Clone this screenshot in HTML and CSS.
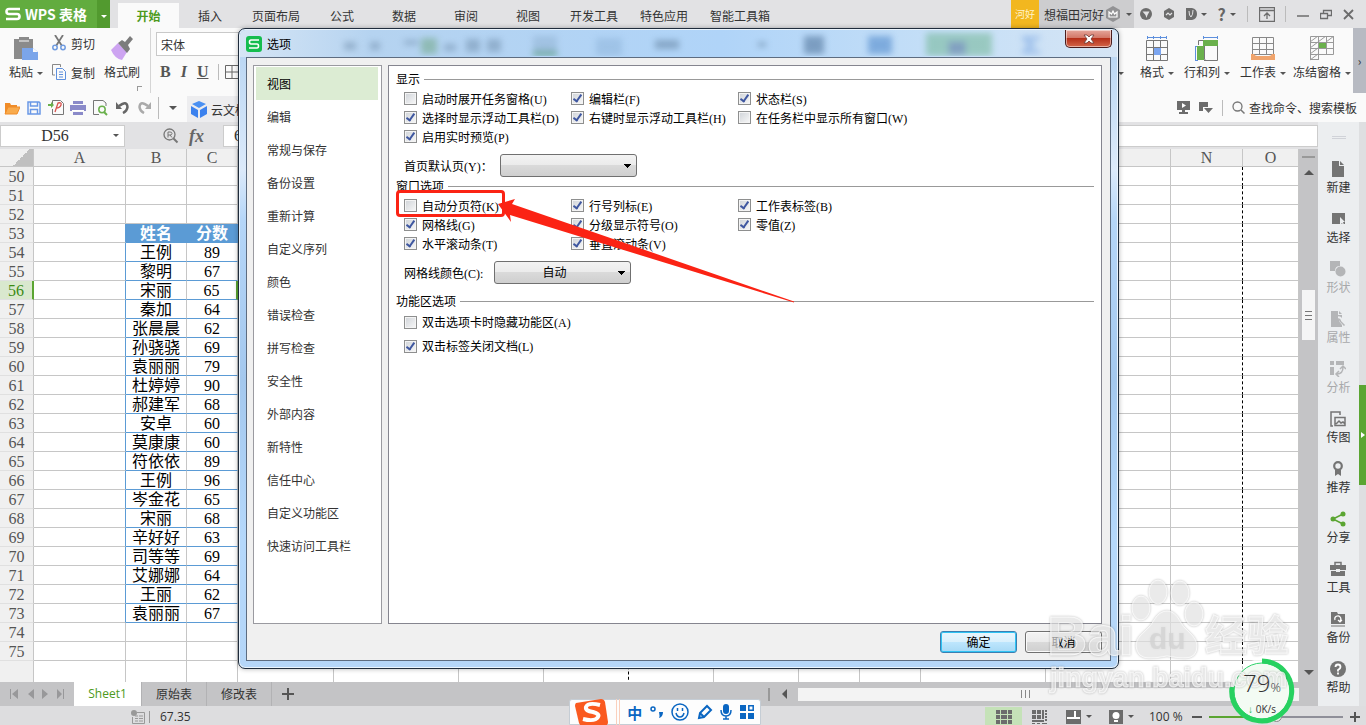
FILE: index.html
```html
<!DOCTYPE html>
<html lang="zh-CN">
  <head>
    <meta charset="UTF-8" />
    <meta name="viewport" content="width=device-width, initial-scale=1.0" />
    <title>WPS 表格</title>
    <link rel="stylesheet" href="styles.css">
  </head>
  <body>
    <div class="app">
      <header class="titlebar">
        <button class="brand">
          <svg width="16" height="14" viewBox="0 0 16 14"><path d="M15 2H4Q1.500 2 1.500 4.500T4 7H12Q14.500 7 14.500 9.500T12 12H1" fill="none" stroke="#fff" stroke-width="2.600"/></svg>
          <span>WPS 表格</span>
        </button>
        <button class="brand-more" aria-label="菜单"><i class="caret"></i></button>
        <nav class="menu">
          <a href="#" class="active">开始</a>
          <a href="#">插入</a>
          <a href="#">页面布局</a>
          <a href="#">公式</a>
          <a href="#">数据</a>
          <a href="#">审阅</a>
          <a href="#">视图</a>
          <a href="#">开发工具</a>
          <a href="#">特色应用</a>
          <a href="#">智能工具箱</a>
        </nav>
        <div class="account">
          <span class="avatar">河好</span>
          <button class="user">想福田河好
            <svg width="14" height="16" viewBox="0 0 14 16"><path d="M7 0l7 4v8l-7 4-7-4V4z" fill="#929294"/><path d="M3 6l2.500 2L7 5l1.500 3L11 6v5H3z" fill="none" stroke="#fff" stroke-width="1.200"/></svg>
            <i class="caret"></i>
          </button>
        </div>
        <div class="window-tools">
          <button aria-label="皮肤"><svg width="12" height="12" viewBox="0 0 12 12"><circle cx="6" cy="6" r="6" fill="#6c6c6c"/><path d="M2.500 3.500h7L7.500 7l-1 3-1-3z" fill="#e2e2e4"/></svg></button>
          <button aria-label="消息"><svg width="12" height="12" viewBox="0 0 12 12"><path d="M6 0l5 3v6l-5 3-5-3V3z" fill="#6c6c6c"/><path d="M3 7l2-2 2 2 2-2" fill="none" stroke="#e2e2e4" stroke-width="1.200"/></svg></button>
          <button aria-label="稻壳"><svg width="11" height="12" viewBox="0 0 11 12"><path d="M0 0h6q5 1 5 6t-5 6H0z" fill="#6c6c6c"/><path d="M3 3q0 5 2 6 2-2 2-7" fill="none" stroke="#e2e2e4"/></svg><i class="caret"></i></button>
          <button class="help" aria-label="帮助">?<i class="caret"></i></button>
          <i class="sep"></i>
          <button aria-label="隐藏功能区"><svg width="16" height="15" viewBox="0 0 16 15"><path d="M.5.5h15v14H.5zM0 3.500h16M8 12V6M5 9l3-3 3 3" fill="none" stroke="#6c6c6c" stroke-width="1.300"/></svg></button>
          <i class="sep"></i>
          <button aria-label="最小化"><svg width="12" height="12" viewBox="0 0 12 12"><path d="M0 8h12" stroke="#6c6c6c" stroke-width="1.500"/></svg></button>
          <button aria-label="还原"><svg width="12" height="11" viewBox="0 0 12 11"><path d="M.5 4.500h7v5h-7zM3.500 4V1.500h8v5H8" fill="none" stroke="#6c6c6c" stroke-width="1.300"/></svg></button>
          <button aria-label="关闭"><svg width="11" height="11" viewBox="0 0 11 11"><path d="M1 1l9 9M10 1l-9 9" stroke="#6c6c6c" stroke-width="1.800"/></svg></button>
        </div>
      </header>

      <section class="ribbon">
        <button class="big paste">
          <svg width="26" height="25" viewBox="0 0 26 25"><path d="M1 3h5V1h10v2h4v9H9v11H1z" fill="#8b8b8b"/><path d="M6 5h10" stroke="#fafafa"/><path d="M9 12h11l5 4v8H9z" fill="#7ba5ea"/><path d="M20 12v4h5" fill="#fafafa"/></svg>
          <span>粘贴<i class="caret"></i></span>
        </button>
        <div class="stack">
          <button><svg width="14" height="16" viewBox="0 0 14 16"><path d="M3 0l7 11M11 0L4 11" stroke="#777" stroke-width="1.800"/><circle cx="3" cy="12.500" r="2.200" fill="none" stroke="#6f9be0" stroke-width="1.500"/><circle cx="11" cy="12.500" r="2.200" fill="none" stroke="#6f9be0" stroke-width="1.500"/></svg>剪切</button>
          <button><svg width="14" height="16" viewBox="0 0 14 16"><path d="M3 11H.5V.5h8V3" fill="none" stroke="#888"/><path d="M4.500 4.500h6l3 3v8h-9zM7 8h4M7 10.500h4M7 13h4" fill="none" stroke="#5d8fdd"/></svg>复制</button>
        </div>
        <button class="big brush">
          <svg width="24" height="25" viewBox="0 0 24 25"><path d="M1 14l7-7 9 9-5 8q-7-1-11-10z" fill="#cda4f1"/><path d="M8 7l4-3 3 2 5-6 3 3-5 6 2 4-3 4z" fill="#7c7c7c"/></svg>
          <span>格式刷</span>
        </button>
        <i class="corner"></i>
        <div class="fonts">
          <input type="text" aria-label="字体" value="宋体">
          <div class="styles">
            <button aria-label="加粗"><b>B</b></button>
            <button aria-label="倾斜"><em>I</em></button>
            <button aria-label="下划线"><b><u>U</u></b></button>
            <i class="sep"></i>
            <svg width="14" height="14" viewBox="0 0 14 14"><path d="M.5.5h13v13H.5zM7 0v14M0 7h14" fill="none" stroke="#666"/></svg>
          </div>
        </div>
        <div class="ribbon-right">
          <button class="big sort">
            <svg width="24" height="25" viewBox="0 0 24 25"><path d="M17 1v19M14 18h6l-3 4z" fill="#5d8fdd" stroke="#5d8fdd" stroke-width="2"/></svg>
            <span>排序<i class="caret"></i></span>
          </button>
          <button class="big">
            <svg width="24" height="25" viewBox="0 0 24 25"><path d="M2 1.500h20M2.500 0v3M8.500 0v3M15.500 0v3M21.500 0v3" stroke="#5d8fdd"/><path d="M1.500 4.500h21v20h-21zM8.500 4v20M15.500 4v20M1 11.500h22M1 18.500h22" fill="none" stroke="#777"/><path d="M9 12h7v7H9z" fill="#7ba5f0"/></svg>
            <span>格式<i class="caret"></i></span>
          </button>
          <button class="big">
            <svg width="24" height="25" viewBox="0 0 24 25"><path d="M8 1.500h15M8.500 0v3M22.500 0v3M.5 10v15M0 10.500h3M0 24.500h3" stroke="#5d8fdd"/><path d="M8 4h15v6H8zM2 10h7v14H2z" fill="#6ab04c"/><path d="M3.500 9V4.500H8M9 24.500h13.500V10M9.500 10v13q0 1 1 1" fill="none" stroke="#777"/></svg>
            <span>行和列<i class="caret"></i></span>
          </button>
          <button class="big">
            <svg width="24" height="25" viewBox="0 0 24 25"><path d="M1.500 1.500h21v17h-21zM8.500 1v17M15.500 1v17M1 7.500h22M1 13.500h22" fill="none" stroke="#888"/><path d="M0 18h3q1 2 3 2h12q2 0 3-2h3v6H0z" fill="#f0a46c"/></svg>
            <span>工作表<i class="caret"></i></span>
          </button>
          <button class="big freeze">
            <svg width="24" height="25" viewBox="0 0 24 25"><path d="M.5.5h23v18H8.500v5h-8zM8.500 0v24M16.500 0v18M0 6.500h24M0 12.500h24M0 18.500h8M0 6l8-6M8 6l8-6M16 6l8-6M0 12l8-6M0 18l8-6M0 24l8-6" fill="none" stroke="#999"/><path d="M9 7h7v5H9z" fill="#6ab04c"/></svg>
            <span>冻结窗格<i class="caret"></i></span>
          </button>
          <button class="ribbon-next" aria-label="更多">›</button>
        </div>
      </section>

      <section class="quickbar">
        <button aria-label="打开"><svg width="16" height="14" viewBox="0 0 16 14"><path d="M1 13V2h5l1 2h6v2" fill="#f08c28"/><path d="M1 13L4 6h12l-3 7z" fill="#f9ab4c" stroke="#f08c28"/></svg></button>
        <button aria-label="保存"><svg width="14" height="14" viewBox="0 0 14 14"><path d="M1 1h11l1 1v11H1zM3.500 1v4h7V1M3.500 13V8.500h7V13" fill="none" stroke="#6a98e6" stroke-width="1.500"/></svg></button>
        <button aria-label="输出为PDF"><svg width="16" height="15" viewBox="0 0 16 15"><path d="M4.500 6V.5h8l3 3v11h-11V9" fill="none" stroke="#777"/><path d="M0 4h3V2l3 3-3 3V6H0z" fill="#6ab04c"/><path d="M7 12l3-9q4-1 3 2t-5 3" fill="none" stroke="#d9534f" stroke-width="1.300"/></svg></button>
        <button aria-label="打印"><svg width="16" height="14" viewBox="0 0 16 14"><path d="M3 0h10v3H3zM0 4h16v6H0zM3 11h10v3H3z" fill="#8a8ac9"/><path d="M2 9.500h12" stroke="#fff"/></svg></button>
        <button aria-label="打印预览"><svg width="15" height="16" viewBox="0 0 15 16"><path d="M13 6V3l-3-2.500H.5v14H6" fill="none" stroke="#777"/><circle cx="9" cy="9.500" r="3.200" fill="none" stroke="#6ab04c" stroke-width="1.500"/><path d="M11 12l3 3" stroke="#6ab04c" stroke-width="2"/></svg></button>
        <button aria-label="撤销"><svg width="13" height="13" viewBox="0 0 13 13"><path d="M3 5q8-6 8.500 1-.5 4-4.500 6" fill="none" stroke="#666" stroke-width="2.500"/><path d="M0 1v7h6z" fill="#666"/></svg></button>
        <button aria-label="恢复"><svg width="13" height="13" viewBox="0 0 13 13"><path d="M10 5Q2-1 1.500 6q.5 4 4.500 6" fill="none" stroke="#aaa" stroke-width="2.500"/><path d="M13 1v7H7z" fill="#aaa"/></svg></button>
        <i class="sep"></i>
        <button class="more" aria-label="更多"><i class="caret large"></i></button>
        <a href="#" class="doc-tab"><svg width="16" height="17" viewBox="0 0 16 17"><path d="M8 0l7 3-7 4-7-4z" fill="#4a90f2"/><path d="M0 5l7 4v8l-7-4zM16 5L9 9v8l7-4z" fill="#3c82ee"/></svg>云文档</a>
        <div class="search">
          <svg width="13" height="13" viewBox="0 0 13 13"><path d="M0 0h13v9H8v2h3v2H2v-2h3V9H0z" fill="#6c6c6c"/><path d="M5 2l4 2.500L5 7z" fill="#fff"/></svg>
          <svg width="14" height="13" viewBox="0 0 14 13"><path d="M0 1h9v5H4v4H0zM5 7h9l-4.500 5z" fill="#6c6c6c"/></svg>
          <i class="sep"></i>
          <svg width="13" height="13" viewBox="0 0 13 13"><circle cx="5.500" cy="5.500" r="4.500" fill="none" stroke="#777" stroke-width="1.300"/><path d="M9 9l3.500 3.500" stroke="#777" stroke-width="1.500"/></svg>
          <span>查找命令、搜索模板</span>
        </div>
      </section>

      <main class="body">
        <div class="workbook">
          <div class="formula-bar">
            <div class="name-box"><input type="text" aria-label="名称框" value="D56"><i class="caret"></i></div>
            <svg class="lookup" width="16" height="16" viewBox="0 0 16 16"><circle cx="6.500" cy="6.500" r="5.500" fill="none" stroke="#777" stroke-width="1.300"/><path d="M10.500 10.500l4 4" stroke="#777" stroke-width="2"/><path d="M5 9.500V4h2q2 0 2 1.500T7 7H5M7 7l2 2.500" fill="none" stroke="#777"/></svg>
            <em class="fx">fx</em>
            <input class="formula" type="text" aria-label="编辑栏" value="67.35">
          </div>
          <div class="sheet">
            <div class="grid"><table id="cells"></table></div>
            <div class="vscroll">
              <i class="split"></i>
              <i class="arrow up"></i>
              <span class="thumb"><i></i><i></i><i></i></span>
              <i class="arrow down"></i>
            </div>
          </div>
          <div class="sheet-tabs">
            <div class="tab-list">
              <svg width="54" height="10" viewBox="0 0 54 10"><path d="M0 0h1v10H0zM8 0v10L2 5zM24 0v10l-6-5zM32 0v10l6-5zM47 0v10l5-5zM53 0h1v10h-1z" fill="#98989a"/></svg>
              <a href="#" class="active">Sheet1</a>
              <a href="#">原始表</a>
              <a href="#">修改表</a>
              <button aria-label="新建工作表"><svg width="12" height="12" viewBox="0 0 12 12"><path d="M6 0v12M0 6h12" stroke="#555" stroke-width="2"/></svg></button>
            </div>
            <i class="split"></i>
            <i class="arrow left"></i>
            <div class="hscroll"><i></i><i></i><i></i></div>
          </div>
        </div>
        <aside class="pane">
          <i class="grip"></i>
          <button><svg width="14" height="16" viewBox="0 0 14 16"><path d="M1 0h7v5h5v11H1z" fill="#747474"/><path d="M9 0l4 4H9z" fill="#747474"/></svg>新建</button>
          <button><svg width="14" height="16" viewBox="0 0 14 16"><path d="M1 2h13v11H1z" fill="#747474"/><path d="M9 6v8l2-2 1 2h1l-1-3h2z" fill="#eceef0"/></svg>选择</button>
          <button class="off"><svg width="16" height="16" viewBox="0 0 16 16"><path d="M0 0h10v5q-5 0-5 5H0z" fill="#b4b5b7"/><circle cx="10.500" cy="10.500" r="5" fill="#b4b5b7"/></svg>形状</button>
          <button class="off"><svg width="16" height="16" viewBox="0 0 16 16"><path d="M1 0h7v4h4v12H1z" fill="#b4b5b7"/><path d="M9 0l3 3H9z" fill="#b4b5b7"/><path d="M8 7q3 0 3 3l4 5" fill="none" stroke="#eceef0" stroke-width="3.500"/><path d="M8 8q2 0 2.500 2.500l4 4" fill="none" stroke="#b4b5b7" stroke-width="1.500"/></svg>属性</button>
          <button class="off"><svg width="16" height="16" viewBox="0 0 16 16"><path d="M0 0h4v4H0zM6 0h8v4H6zM0 6h4v8H0z" fill="#b4b5b7"/><path d="M7 13q6 0 6-7M9 10l-3 3 3 3M10 8l3-3 3 3" fill="none" stroke="#b4b5b7" stroke-width="1.500"/></svg>分析</button>
          <button><svg width="16" height="16" viewBox="0 0 16 16"><path d="M3 15H1V1h9v3" fill="none" stroke="#747474" stroke-width="1.500"/><path d="M5 6.500h10v8H5zM6 13l3-3 2 2 2-1 2 2" fill="none" stroke="#747474" stroke-width="1.500"/></svg>传图</button>
          <button><svg width="12" height="16" viewBox="0 0 12 16"><circle cx="6" cy="5" r="3.800" fill="none" stroke="#747474" stroke-width="2.200"/><path d="M3 9v6l3-2 3 2V9" fill="#747474"/></svg>推荐</button>
          <button><svg width="16" height="16" viewBox="0 0 16 16"><path d="M13 3L3 8l10 5" fill="none" stroke="#5ba532" stroke-width="1.500"/><g fill="#5ba532"><circle cx="13" cy="3" r="2.500"/><circle cx="3" cy="8" r="2.500"/><circle cx="13" cy="13" r="2.500"/></g></svg>分享</button>
          <button><svg width="16" height="16" viewBox="0 0 16 16"><path d="M0 4h16v5H0zM1 10h14v5H1z" fill="#747474"/><path d="M5 4V1.500h6V4" fill="none" stroke="#747474" stroke-width="1.500"/><path d="M6 8h4v3H6z" fill="#eceef0"/></svg>工具</button>
          <button><svg width="16" height="16" viewBox="0 0 16 16"><path d="M1 1h6l1 2h7v10H1z" fill="#747474"/><path d="M1 15h14" stroke="#747474"/><path d="M5 9a3 3 0 1 1 5 1M8 9l2 2 2-2" fill="none" stroke="#fff" stroke-width="1.200"/></svg>备份</button>
          <button><svg width="16" height="16" viewBox="0 0 16 16"><circle cx="8" cy="8" r="8" fill="#747474"/><path d="M5.500 6q0-2.500 2.500-2.500T10.500 6Q10.500 7.500 8 9v1.500M8 11.500v2" fill="none" stroke="#fff" stroke-width="1.800"/></svg>帮助</button>
        </aside>
        <div class="edge"><button aria-label="展开"><i></i></button></div>
      </main>

      <footer class="status">
        <svg width="14" height="14" viewBox="0 0 14 14"><circle cx="3" cy="3" r="3" fill="#999"/><path d="M6 2.500h7.500v11h-12V7M4 6h3M8 6h4M4 8.500h3M8 8.500h4M4 11h3M8 11h4" fill="none" stroke="#999"/></svg>
        <i class="sep"></i>
        <span class="sum">67.35</span>
        <div class="views">
          <button class="active" aria-label="普通视图"><svg width="16" height="14" viewBox="0 0 16 14"><path d="M0 0h16v14H0z" fill="#6c6c6c"/><path d="M0 4.500h16M0 9.500h16M4.500 0v14M11.500 0v14" stroke="#c5e2b8"/></svg></button>
          <button aria-label="分页预览"><svg width="16" height="14" viewBox="0 0 16 14"><path d="M0 0h4v4H0zM5 0h4v4H5zM0 5h4v4H0zM5 5h4v4H5zM10 0h2v9h-2zM0 10h12v2H0zM13 0h2v2h-2zM13 3h2v2h-2zM13 6h2v2h-2zM13 9h2v2h-2zM0 13h3v1H0zM5 13h3v1H5zM10 13h5v1h-5z" fill="#6c6c6c"/></svg></button>
          <button aria-label="阅读模式"><svg width="15" height="14" viewBox="0 0 15 14"><path d="M0 0h15v14H0z" fill="#6c6c6c"/><path d="M9 1v8M1 8h13" stroke="#fff" stroke-width="2"/></svg><i class="caret"></i></button>
          <button aria-label="护眼模式"><svg width="14" height="14" viewBox="0 0 14 14"><path d="M0 0h14v14H0z" fill="#6c6c6c"/><circle cx="7" cy="5.500" r="3.500" fill="#fff"/><path d="M5 10h4v2H5z" fill="#fff"/></svg><i class="caret"></i></button>
          <span class="zoom-value">100 %</span>
          <button class="step" aria-label="缩小"><svg width="10" height="10" viewBox="0 0 10 10"><path d="M0 5h10" stroke="#555" stroke-width="2"/></svg></button>
          <input class="zoom" type="range" aria-label="缩放" value="50">
          <button class="step" aria-label="放大"><svg width="10" height="10" viewBox="0 0 10 10"><path d="M0 5h10M5 0v10" stroke="#555" stroke-width="2"/></svg></button>
        </div>
      </footer>
    </div>

    <div class="dialog" role="dialog" aria-label="选项">
      <div class="dialog-title">
        <svg class="glass" width="860" height="26" viewBox="0 0 860 26">
          <defs><filter id="soft" x="-20%" y="-20%" width="140%" height="140%"><feGaussianBlur stdDeviation="3"/></filter></defs>
          <g filter="url(#soft)" opacity=".5">
            <path d="M98 12h12v8H98zM124 12h10v8h-10zM158 10h14v5h-14zM198 14h12v7h-12zM220 9h14v13h-14zM241 9h14v13h-14z" fill="#6f8daa"/>
            <path d="M175 8h16v16h-16z" fill="#6ba37c"/>
            <path d="M287 6h24v14h-24z" fill="#8fb0d0"/><path d="M287 20h24v6h-24z" fill="#2c8448"/>
            <path d="M350 8h26v18h-26z" fill="#8db3d9"/>
            <path d="M409 10h24v9h-24zM512 12h8v5h-8z" fill="#5d7b99"/>
            <path d="M558 6h20v18h-20z" fill="#3f648c"/>
            <path d="M622 6h24v18h-24z" fill="#3e7cc4"/>
            <path d="M680 3h66v23h-66z" fill="#6bb28c"/><path d="M702 11h18v14h-18z" fill="#3f648c"/>
            <path d="M776 6h18v4h-10l6 5-6 5h10v4h-18v-4l7-5-7-5z" fill="#6f9fe0"/>
          </g>
        </svg>
        <svg class="logo" width="16" height="16" viewBox="0 0 16 16"><rect width="16" height="16" rx="3" fill="#14bd4f"/><path d="M13 4H5Q3.500 4 3.500 6T5 8H11Q12.500 8 12.500 10T11 12H3" fill="none" stroke="#fff" stroke-width="1.600"/></svg>
        <span>选项</span>
        <button class="close" aria-label="关闭"><svg width="12" height="10" viewBox="0 0 12 10"><path d="M1 1h3l2 2 2-2h3L8 5l3 4H8L6 7 4 9H1l3-4z" fill="#fff" stroke="#6b3a36" stroke-width=".8"/></svg></button>
      </div>
      <div class="dialog-body">
        <div class="dialog-main">
          <nav class="options-nav">
            <a href="#" class="active">视图</a>
            <a href="#">编辑</a>
            <a href="#">常规与保存</a>
            <a href="#">备份设置</a>
            <a href="#">重新计算</a>
            <a href="#">自定义序列</a>
            <a href="#">颜色</a>
            <a href="#">错误检查</a>
            <a href="#">拼写检查</a>
            <a href="#">安全性</a>
            <a href="#">外部内容</a>
            <a href="#">新特性</a>
            <a href="#">信任中心</a>
            <a href="#">自定义功能区</a>
            <a href="#">快速访问工具栏</a>
          </nav>
          <div class="options">
            <h3>显示</h3>
            <div class="checks">
              <label><input type="checkbox">启动时展开任务窗格(U)</label>
              <label><input type="checkbox" checked>编辑栏(F)</label>
              <label><input type="checkbox" checked>状态栏(S)</label>
              <label><input type="checkbox" checked>选择时显示浮动工具栏(D)</label>
              <label><input type="checkbox" checked>右键时显示浮动工具栏(H)</label>
              <label><input type="checkbox">在任务栏中显示所有窗口(W)</label>
              <label><input type="checkbox" checked>启用实时预览(P)</label>
            </div>
            <div class="field">
              <label for="home">首页默认页(Y)：</label>
              <select id="home"><option></option></select>
            </div>
            <h3>窗口选项</h3>
            <div class="checks">
              <label class="marked"><input type="checkbox">自动分页符(K)</label>
              <label><input type="checkbox" checked>行号列标(E)</label>
              <label><input type="checkbox" checked>工作表标签(B)</label>
              <label><input type="checkbox" checked>网格线(G)</label>
              <label><input type="checkbox" checked>分级显示符号(O)</label>
              <label><input type="checkbox" checked>零值(Z)</label>
              <label><input type="checkbox" checked>水平滚动条(T)</label>
              <label><input type="checkbox" checked>垂直滚动条(V)</label>
            </div>
            <div class="field line-color">
              <label for="color">网格线颜色(C):</label>
              <select id="color"><option>自动</option></select>
            </div>
            <h3>功能区选项</h3>
            <div class="checks loose">
              <label><input type="checkbox">双击选项卡时隐藏功能区(A)</label>
              <label><input type="checkbox" checked>双击标签关闭文档(L)</label>
            </div>
            <svg class="pointer" width="300" height="106" viewBox="0 0 300 106"><path d="M0 6L17 1 14 6 296 103.500 296 104.500 12 17 13 24z" fill="#fb2314"/></svg>
          </div>
        </div>
        <div class="dialog-actions">
          <button class="primary">确定</button>
          <button>取消</button>
        </div>
      </div>
    </div>

    <div class="speed">
      <svg width="68" height="68" viewBox="0 0 68 68"><circle cx="34" cy="34" r="32" fill="#fff" fill-opacity=".75"/><circle cx="34" cy="34" r="28" fill="#f3fbf3" stroke="#2fd36b"/><path d="M34 4A30 30 0 1 1 4 30" fill="none" stroke="#27d160" stroke-width="5"/></svg>
    </div>

    <svg class="watermark" width="260" height="130" viewBox="0 0 260 130">
      <g fill="#fff" fill-opacity=".6" stroke="#fff" stroke-opacity=".7">
        <text x="2" y="80" class="wm-name">Bai</text>
        <ellipse cx="96" cy="33" rx="9" ry="12"/>
        <ellipse cx="113" cy="17" rx="9" ry="12"/>
        <ellipse cx="135" cy="18" rx="9" ry="12"/>
        <ellipse cx="149" cy="39" rx="9" ry="12"/>
        <path d="M122 36q8 0 13 10 3 6 9 11 8 7 8 14 0 12-12 12-8 0-18-2-9 2-18 2-12 0-13-12 0-8 9-15 6-5 9-11 5-9 13-9z"/>
        <text x="160" y="76" class="wm-cn">经验</text>
        <text x="5" y="112" class="wm-url">jingyan.baidu.com</text>
      </g>
      <text x="104" y="74" class="wm-du">du</text>
    </svg>

    <div class="speed readout">
      <p>79<small>%</small></p>
      <span><b>↓</b> 0K/s</span>
    </div>

    <div class="ime">
      <svg width="34" height="28" viewBox="0 0 34 28"><path d="M2 5L27 1q3 0 4 3l3 20q0 3-3 4H8q-2 0-3-3L1 8q0-2 1-3z" fill="#fa5a20"/><path d="M26 7q-12-3-14 2-1 4 7 5 7 2 5 5-3 5-15 2" fill="none" stroke="#fff" stroke-width="4"/></svg>
      <i class="rule"></i>
      <b>中</b>
      <svg width="14" height="14" viewBox="0 0 14 14"><circle cx="3" cy="4" r="2" fill="none" stroke="#0a66c2" stroke-width="1.500"/><path d="M9 7h4q0 5-4 6 1-2 0-6z" fill="#0a66c2"/></svg>
      <svg width="18" height="18" viewBox="0 0 18 18"><g fill="none" stroke="#0a66c2" stroke-width="1.500"><circle cx="9" cy="9" r="8"/><path d="M5 10q1 4 4 4t4-4M6.500 5v3M11.500 5v3"/></g></svg>
      <svg width="16" height="16" viewBox="0 0 16 16"><path d="M2 14l1-5 7-7 4 4-7 7zM3 9l4 4" fill="none" stroke="#0a66c2" stroke-width="2"/></svg>
      <svg width="12" height="16" viewBox="0 0 12 16"><rect x="3" y="0" width="6" height="10" rx="3" fill="#0a66c2"/><path d="M1 6q0 6 5 6t5-6M6 12v3M3 15h6" fill="none" stroke="#0a66c2" stroke-width="1.500"/></svg>
      <svg width="14" height="14" viewBox="0 0 14 14"><path d="M0 0h6v6H0zM0 8h6v6H0zM8 8h6v6H8z" fill="#0a66c2"/><path d="M8.800.8h4.400v4.400H8.800z" fill="none" stroke="#0a66c2" stroke-width="1.500"/></svg>
    </div>

    <script src="script.js"></script>
  </body>
</html>
```
FILE: styles.css
```css
* {
  box-sizing: border-box;
  margin: 0;
  padding: 0;
}

body {
  font-family: "Noto Sans CJK SC", sans-serif;
  font-size: 12px;
  color: #333;
  overflow: hidden;
}

button,
input,
select {
  font: inherit;
  color: inherit;
  border: none;
  background: none;
}

a {
  color: inherit;
  text-decoration: none;
}

svg {
  display: block;
  flex: none;
}

.app {
  display: flex;
  flex-direction: column;
  height: 100vh;
  background-color: #fafafa;
}

.caret {
  display: inline-block;
  border: 3px solid transparent;
  border-top-color: #555;
  border-bottom: none;
  margin-left: 4px;
  vertical-align: middle;
}

.caret.large {
  border-width: 4px;
  border-bottom: none;
  margin: 0;
}

.sep {
  width: 1px;
  height: 16px;
  background-color: #bbb;
}

/* title bar */
.titlebar {
  display: flex;
  flex: none;
  height: 28px;
  background-color: #e2e2e4;
}

.brand {
  display: flex;
  align-items: center;
  gap: 4px;
  width: 97px;
  padding-left: 5px;
  background-color: #62ac3f;
  color: #fff;
  font-size: 14px;
  font-weight: bold;
  white-space: nowrap;
}

.brand-more {
  width: 13px;
  background-color: #529a2f;
}

.brand-more .caret {
  border-top-color: #fff;
  margin: 0;
}

.menu {
  display: flex;
  padding-left: 8px;
}

.menu a {
  min-width: 62px;
  padding: 0 11px;
  line-height: 32px;
  text-align: center;
}

.menu .active {
  min-width: 61px;
  height: 25px;
  margin-top: 3px;
  line-height: 26px;
  background-color: #fafafa;
  color: #4d9a20;
  font-weight: bold;
}

.account {
  display: flex;
  margin-left: auto;
}

.avatar {
  width: 28px;
  background-color: #f2b71f;
  color: #fff3c8;
  font-size: 10px;
  line-height: 27px;
  text-align: center;
}

.user {
  display: flex;
  align-items: center;
  gap: 2px;
  width: 95px;
  padding-left: 5px;
  background-color: #cdcdcf;
  white-space: nowrap;
}

.window-tools {
  display: flex;
  align-items: center;
  justify-content: space-between;
  width: 232px;
  padding: 0 12px 0 6px;
}

.window-tools button {
  display: flex;
  align-items: center;
}

.window-tools .help {
  color: #666;
  font-size: 16px;
  font-weight: bold;
}

/* ribbon */
.ribbon {
  display: flex;
  flex: none;
  height: 65px;
}

.big {
  display: flex;
  flex-direction: column;
  align-items: center;
  gap: 2px;
  padding-top: 8px;
  white-space: nowrap;
}

.paste {
  width: 52px;
}

.stack {
  display: flex;
  flex-direction: column;
  gap: 11px;
  width: 52px;
  padding-top: 6px;
}

.stack button {
  display: flex;
  align-items: center;
  gap: 5px;
  height: 18px;
}

.brush {
  width: 36px;
}

.corner {
  align-self: flex-end;
  width: 5px;
  height: 5px;
  margin: 0 0 2px -3px;
  border: 1px solid #999;
  border-right: none;
  border-bottom: none;
}

.fonts {
  width: 120px;
  margin-left: 8px;
  padding: 4px 0 0 5px;
  border-left: 1px solid #d5d5d5;
}

.fonts input {
  width: 100%;
  height: 24px;
  padding-left: 4px;
  border: 1px solid #c9c9c9;
  background-color: #fff;
}

.styles {
  display: flex;
  align-items: center;
  gap: 10px;
  height: 32px;
  padding-left: 4px;
  color: #555;
  font-family: "Liberation Serif", serif;
  font-size: 16px;
}

.styles .sep {
  margin-right: -4px;
}

.styles em {
  font-weight: bold;
}

.ribbon-right {
  display: flex;
  margin-left: auto;
}

.ribbon-right .big {
  width: 56px;
}

.ribbon-right .freeze {
  width: 62px;
}

.ribbon-right .big:nth-child(2) {
  width: 44px;
}

.ribbon-next {
  width: 13px;
  background-color: #b7bac2;
}

/* quick access */
.quickbar {
  display: flex;
  align-items: center;
  flex: none;
  height: 29px;
  padding-left: 1px;
}

.quickbar button {
  display: flex;
  justify-content: center;
  width: 22px;
}

.quickbar > .sep {
  height: 22px;
  margin-left: 3px;
}

.quickbar .more {
  width: 28px;
}

.doc-tab {
  display: flex;
  align-items: center;
  gap: 4px;
  align-self: stretch;
  width: 80px;
  margin-top: 3px;
  padding-left: 4px;
  background-color: #ededef;
  white-space: nowrap;
}

.search {
  display: flex;
  align-items: center;
  gap: 9px;
  margin-left: auto;
  padding-right: 9px;
}

.search span {
  margin-left: -5px;
}

/* workbook */
.body {
  display: flex;
  flex: 1;
  min-height: 0;
}

.workbook {
  display: flex;
  flex-direction: column;
  flex: 1;
  min-width: 0;
}

.formula-bar {
  display: flex;
  align-items: center;
  height: 27px;
  padding: 2px 0;
  background-color: #e2e2e4;
}

.name-box {
  display: flex;
  align-items: center;
  width: 125px;
  height: 22px;
  padding-right: 5px;
  border: 1px solid #ccc;
  background-color: #fff;
}

.formula-bar input {
  width: 100%;
  font-family: "Liberation Serif", serif;
  font-size: 16px;
}

.name-box input {
  text-align: center;
}

.lookup {
  margin-left: 38px;
}

.fx {
  width: 44px;
  padding-left: 10px;
  color: #666;
  font-family: "Liberation Serif", serif;
  font-size: 18px;
  font-weight: bold;
  line-height: 20px;
}

.formula-bar .formula {
  flex: 1;
  height: 22px;
  padding-left: 10px;
  border: 1px solid #ccc;
  background-color: #fff;
}

.sheet {
  display: flex;
  flex: 1;
  min-height: 0;
}

.grid {
  flex: 1;
  min-width: 0;
  overflow: hidden;
  background-color: #fff;
}

.grid table {
  width: 100%;
  table-layout: fixed;
  border-spacing: 0;
  color: #000;
  font-family: "Liberation Serif", "Noto Sans CJK SC", serif;
  font-size: 16px;
  line-height: 16px;
  text-align: center;
}

.grid th,
.grid td {
  height: 19px;
  padding-top: 2px;
  border-right: 1px solid #c6c6c6;
  border-bottom: 1px solid #c6c6c6;
  overflow: hidden;
  white-space: nowrap;
}

.grid th {
  background-color: #f0f0f0;
  color: #555;
  font-weight: normal;
}

.grid thead th {
  height: 18px;
  padding-top: 1px;
}

.grid tbody th {
  border-bottom-color: #e0e0e0;
}

/* the last row is cut off by the tab bar */
.grid tbody tr:last-child > * {
  height: 24px;
}

.grid .select-all {
  background: linear-gradient(135deg, #f0f0f0 60%, #c0c0c0 60%);
}

.grid .before-data {
  border-right-color: #5b9bd5;
}

.grid .data {
  border-bottom-color: #5b9bd5;
}

.grid .head {
  border-color: #5b9bd5;
  background-color: #5b9bd5;
  color: #fff;
  font-weight: bold;
}

.grid tbody .current {
  border-right: 2px solid #5ba532;
  background-color: #d9e8ce;
  color: #3b8a14;
}

.grid .beside-current {
  border-right: 2px solid #5ba532;
}

.grid td.page-break {
  border-right: 1px dashed #000;
}

.arrow {
  border: 5px solid transparent;
}

.arrow.up {
  border-top: none;
  border-bottom-color: #555;
}

.arrow.down {
  border-bottom: none;
  border-top-color: #555;
}

.arrow.left {
  border-left: none;
  border-right-color: #555;
}

.vscroll {
  display: flex;
  flex-direction: column;
  align-items: center;
  width: 19px;
  padding: 7px 0;
  background-color: #c4c4c6;
}

.vscroll .split {
  width: 13px;
  height: 2px;
  margin-bottom: 12px;
  background-color: #999;
}

.vscroll .thumb {
  display: flex;
  flex-direction: column;
  align-items: center;
  justify-content: center;
  gap: 3px;
  width: 13px;
  height: 50px;
  margin: 115px 0 auto;
  background-color: #f5f5f5;
}

.vscroll .thumb i {
  width: 7px;
  height: 1px;
  background-color: #777;
}

.sheet-tabs {
  display: flex;
  align-items: center;
  height: 24px;
  padding-right: 19px;
  background-color: #c4c4c6;
}

.tab-list {
  display: flex;
  align-items: center;
  flex: 0 0 59%;
  height: 100%;
}

.tab-list svg {
  margin: 0 10px;
}

.tab-list a {
  width: 65px;
  height: 25px;
  border-right: 1px solid #b2b2b4;
  line-height: 24px;
  text-align: center;
}

.tab-list .active {
  width: 68px;
  background-color: #fff;
  color: #4d9a20;
  font-family: "Open Sans", sans-serif;
  font-size: 12px;
}

.sheet-tabs > .split {
  width: 2px;
  height: 13px;
  margin: 0 12px 0 2px;
  background-color: #999;
}

.hscroll {
  display: flex;
  align-items: center;
  justify-content: center;
  flex: 1;
  gap: 3px;
  height: 13px;
  margin-left: 11px;
  padding-right: 46px;
  background-color: #f3f3f3;
}

.hscroll i {
  width: 1px;
  height: 8px;
  background-color: #888;
}

/* task pane */
.pane {
  display: flex;
  flex-direction: column;
  align-items: center;
  width: 41px;
  padding-top: 14px;
  background-color: #eceef0;
}

.pane button {
  display: flex;
  flex: none;
  flex-direction: column;
  align-items: center;
  gap: 1px;
  height: 50px;
}

.grip {
  flex: none;
  width: 14px;
  height: 3px;
  margin-bottom: 22px;
  border: 1px solid #d0d2d8;
  border-width: 1px 0;
}

.pane .off {
  color: #a8a9ab;
}

.edge {
  width: 7px;
  padding-top: 263px;
  background-color: #dedfe1;
}

.edge button {
  display: flex;
  align-items: center;
  width: 7px;
  height: 100px;
  padding-left: 2px;
  background-color: #5ba532;
}

.edge i {
  border: 3px solid transparent;
  border-left: 4px solid #fff;
  border-right: none;
}

/* status bar */
.status {
  display: flex;
  align-items: center;
  flex: none;
  height: 19px;
  padding: 2px 6px 0 131px;
  background-color: #dddddf;
}

.status .sep {
  height: 12px;
  margin: 0 10px 0 4px;
  background-color: #999;
}

.sum,
.zoom-value {
  font-family: "Open Sans", sans-serif;
  font-size: 12px;
}

.views {
  display: flex;
  align-items: center;
  margin-left: auto;
}

.views button {
  display: flex;
  align-items: center;
  justify-content: center;
  gap: 1px;
  width: 42px;
  height: 19px;
}

.views button:nth-child(2) {
  width: 36px;
}

.views .active {
  width: 37px;
  background-color: #c5e2b8;
}

.zoom-value {
  width: 50px;
  padding-left: 7px;
  white-space: nowrap;
}

.views .step {
  width: 10px;
}

.zoom {
  width: 134px;
  height: 12px;
  margin: 0 7px;
  appearance: none;
  background: linear-gradient(to right, #5ba532 50%, #8f8f99 50%) center / 100% 2px no-repeat;
}

.zoom::-webkit-slider-thumb {
  appearance: none;
  width: 11px;
  height: 11px;
  border: 1px solid #888;
  border-radius: 50%;
  background-color: #eee;
}

/* options dialog */
.dialog {
  position: absolute;
  top: 28px;
  left: 238px;
  width: 881px;
  padding: 0 7px 7px;
  border: 1px solid #1f2c3c;
  border-radius: 7px;
  background: linear-gradient(to bottom, #b4d3f2, #dceafa 22%, #b5d6f8 30%, #a4c8ee 55%, #b5d8fb 80%, #b5d6f8);
  box-shadow: inset 0 0 0 1px #eaf4fd, 0 0 5px rgba(0, 0, 0, 0.3);
  color: #000;
  font-family: "Liberation Serif", "Noto Sans CJK SC", serif;
}

.dialog-title {
  position: relative;
  display: flex;
  align-items: center;
  gap: 5px;
  height: 27px;
  margin: 1px -6px 0;
  padding-left: 6px;
  border-radius: 6px 6px 0 0;
  background: linear-gradient(to right, #d5e5f5, #b5d3f0 15%, #b0d4f8 55%, #c5dff7 80%, #d5e5f5);
  font-family: "Noto Sans CJK SC", sans-serif;
}

.glass {
  position: absolute;
  top: 0;
  left: 6px;
}

.logo,
.dialog-title span {
  position: relative;
}

.close {
  position: absolute;
  top: 0;
  right: 5px;
  display: flex;
  align-items: center;
  justify-content: center;
  width: 47px;
  height: 18px;
  border: 1px solid #4a1d1d;
  border-top: none;
  border-radius: 0 0 5px 5px;
  background: linear-gradient(to bottom, #e5a79c, #d37868 45%, #b5301a 50%, #d4664a);
  box-shadow: inset 0 0 0 1px rgba(255, 255, 255, 0.5);
}

.dialog-body {
  padding: 7px 8px 7px 6px;
  border: 1px solid #5d6c80;
  background-color: #f0f0f0;
}

.dialog-main {
  display: flex;
  gap: 6px;
}

.options-nav {
  width: 129px;
  padding: 1px 3px 61px 2px;
  border: 1px solid #9a9aa0;
  background-color: #fff;
  color: #333;
  font-family: "Noto Sans CJK SC", sans-serif;
}

.options-nav a {
  display: block;
  padding-left: 11px;
  line-height: 33px;
}

.options-nav .active {
  background-color: #dcecd3;
  color: #000;
}

.options {
  position: relative;
  flex: 1;
  padding: 4px 7px 0;
  border: 1px solid #85858f;
  background-color: #fff;
}

.options h3 {
  display: flex;
  align-items: center;
  gap: 4px;
  height: 18px;
  font-size: 12px;
  font-weight: normal;
}

.options h3::after {
  content: "";
  flex: 1;
  height: 1px;
  background-color: #999;
}

.checks {
  display: grid;
  grid-template-columns: 167px 167px 1fr;
  padding: 1px 0 0 8px;
}

.checks label {
  position: relative;
  display: flex;
  align-items: center;
  gap: 5px;
  height: 19px;
  white-space: nowrap;
}

.checks.loose {
  grid-template-columns: 1fr;
  padding-top: 0;
}

.loose label {
  height: 24px;
}

.checks input {
  display: flex;
  align-items: flex-start;
  justify-content: center;
  appearance: none;
  width: 13px;
  height: 13px;
  border: 1px solid #8e8f8f;
  background: linear-gradient(135deg, #cfd3d8, #f8f8f8);
  box-shadow: inset 0 0 0 1px #f4f4f4;
}

.checks input:checked::before {
  content: "";
  width: 3px;
  height: 7px;
  border: solid #3f57a0;
  border-width: 0 2px 2px 0;
  transform: rotate(35deg);
}

/* red frame around the option being explained */
.marked::after {
  content: "";
  position: absolute;
  top: -6px;
  left: -8px;
  width: 103px;
  height: 21px;
  border: 3px solid #fb2314;
  border-radius: 4px;
}

.pointer {
  position: absolute;
  top: 132px;
  left: 109px;
}

.field {
  display: flex;
  align-items: center;
  margin-top: 8px;
  padding-left: 8px;
}

.field label {
  width: 96px;
  white-space: nowrap;
}

.field select {
  width: 137px;
  height: 23px;
  padding: 0 16px 0 0;
  appearance: none;
  border: 1px solid #707070;
  border-radius: 3px;
  background:
    linear-gradient(to bottom right, #000 50%, transparent 50%) 127px 9px / 4px 4px no-repeat,
    linear-gradient(to bottom left, #000 50%, transparent 50%) 123px 9px / 4px 4px no-repeat,
    linear-gradient(to bottom, #f3f3f3, #ebebeb 50%, #dadada 50%, #cfcfcf);
  text-align: center;
  text-align-last: center;
}

.line-color {
  margin: 8px 0;
}

.line-color label {
  width: 90px;
}

.dialog-actions {
  display: flex;
  justify-content: flex-end;
  gap: 8px;
  padding-top: 7px;
}

.dialog-actions button {
  width: 77px;
  height: 22px;
  border: 1px solid #707070;
  border-radius: 3px;
  background: linear-gradient(to bottom, #f3f3f3, #ebebeb 50%, #dadada 50%, #cfcfcf);
  box-shadow: inset 0 0 0 1px #fafafa;
}

.dialog-actions .primary {
  border-color: #3c7fb1;
  background: linear-gradient(to bottom, #eaf6fd, #d9f0fc 50%, #bee6fd 50%, #a7d9f5);
  box-shadow: inset 0 0 0 1px #2fc4f4;
}

/* floating things */
.watermark {
  position: absolute;
  right: 61px;
  bottom: 20px;
  width: 260px;
  filter: drop-shadow(0 0 1px rgba(0, 0, 0, 0.35));
}

.wm-name {
  font: bold 56px "Liberation Sans", sans-serif;
}

.wm-du {
  font: bold 30px "Liberation Sans", sans-serif;
  fill: #d3d3d3;
  fill-opacity: 0.8;
}

.wm-cn {
  font: bold 42px "Noto Sans CJK SC", sans-serif;
}

.wm-url {
  font: bold 27px "Liberation Sans", sans-serif;
}

.speed {
  position: absolute;
  right: 70px;
  bottom: 0;
  display: grid;
  justify-items: center;
  width: 68px;
  height: 68px;
  color: #333;
  font-family: "Open Sans", sans-serif;
}

.readout {
  align-content: start;
  padding-top: 11px;
}

.readout p {
  font-size: 24px;
  font-weight: 300;
  line-height: 30px;
}

.readout small {
  font-size: 13px;
}

.readout span {
  font-size: 10px;
  line-height: 14px;
}

.readout b {
  color: #14b34b;
}

.ime {
  position: absolute;
  bottom: 0;
  left: 569px;
  display: flex;
  align-items: center;
  justify-content: space-between;
  width: 192px;
  height: 26px;
  padding: 0 6px 0 4px;
  border: 1px solid #c5cdd5;
  border-radius: 3px 3px 0 0;
  background-color: #fdfdfd;
}

.ime .rule {
  width: 4px;
  height: 26px;
  border: 1px solid #fad0bd;
  border-width: 0 1px;
}

.ime b {
  color: #0a66c2;
  font-size: 15px;
}
```
FILE: script.js
```js
// column letter -> width, the last one takes what is left
const columns = [
  ["A", 92], ["B", 61], ["C", 51], ["D", 96], ["E", 125],
  ["F", 85], ["G", 85], ["H", 85], ["I", 85], ["J", 61],
  ["K", 61], ["L", 125], ["M", 125], ["N", 72], ["O", 0],
];
const pageBreaks = ["G", "N"];
const firstRow = 50;
const lastRow = 76;
const currentRow = 56;
const dataStart = 53;
const data = [
  ["姓名", "分数"], ["王例", 89], ["黎明", 67], ["宋丽", 65], ["秦加", 64],
  ["张晨晨", 62], ["孙骁骁", 69], ["袁丽丽", 79], ["杜婷婷", 90],
  ["郝建军", 68], ["安卓", 60], ["莫康康", 60], ["符依依", 89],
  ["王例", 96], ["岑金花", 65], ["宋丽", 68], ["辛好好", 63],
  ["司等等", 69], ["艾娜娜", 64], ["王丽", 62], ["袁丽丽", 67],
];

let html = '<colgroup><col style="width: 34px">';
columns.forEach(([, width]) => {
  html += width ? `<col style="width: ${width}px">` : "<col>";
});
html += '</colgroup><thead><tr><th class="select-all"></th>';
columns.forEach(([name]) => {
  html += `<th>${name}</th>`;
});
html += "</tr></thead><tbody>";

for (let row = firstRow; row <= lastRow; row++) {
  const record = data[row - dataStart];
  const label = row < lastRow ? row : "";
  html += `<tr><th class="${row === currentRow ? "current" : ""}">${label}</th>`;
  columns.forEach(([name]) => {
    const classes = [];
    let text = "";
    if (pageBreaks.includes(name)) classes.push("page-break");
    if (record) {
      if (name === "A") classes.push("before-data");
      if (name === "B" || name === "C") {
        text = record[name === "B" ? 0 : 1];
        classes.push(row === dataStart ? "head" : "data");
      }
    }
    if (row === currentRow && name === "C") classes.push("beside-current");
    html += `<td class="${classes.join(" ")}">${text}</td>`;
  });
  html += "</tr>";
}

document.getElementById("cells").innerHTML = html + "</tbody>";
```
